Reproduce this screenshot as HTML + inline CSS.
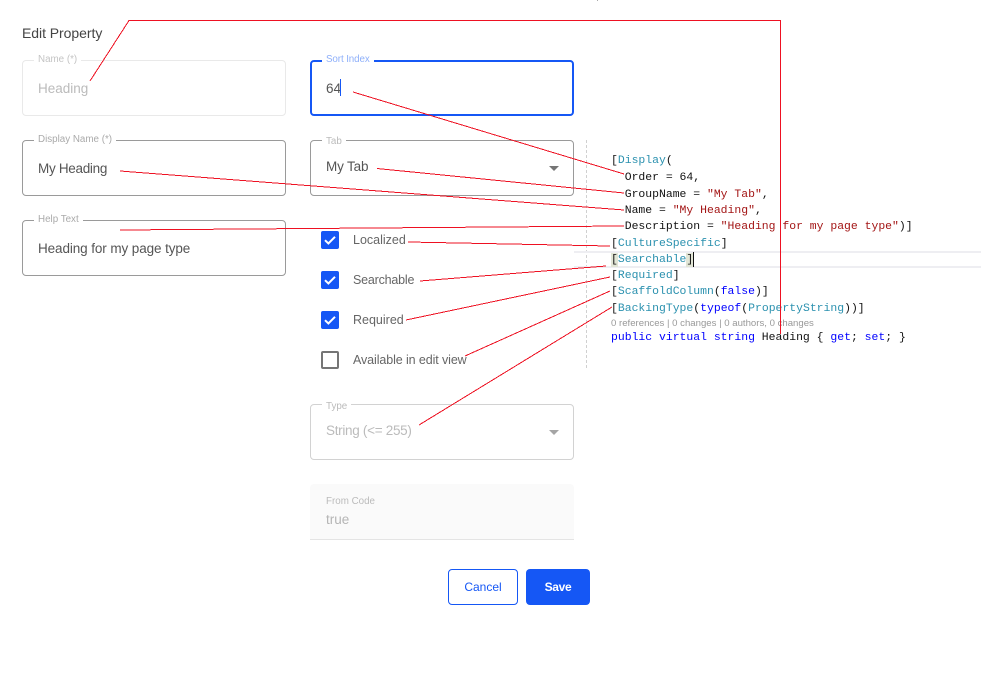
<!DOCTYPE html>
<html><head><meta charset="utf-8">
<style>
html,body{margin:0;padding:0;background:#fff;width:993px;height:686px;overflow:hidden}
body{position:relative;font-family:"Liberation Sans",sans-serif;color:#555}
.a{position:absolute;white-space:nowrap}
.box{position:absolute;box-sizing:border-box;border:1px solid #9a9a9a;border-radius:4px;width:264px;height:56px}
.lab{position:absolute;background:#fff;font-size:9.8px;line-height:12px;padding:0 4px;color:#aaa;white-space:nowrap}
.val{position:absolute;font-size:13.5px;line-height:18px;color:#555;white-space:nowrap}
.cb{position:absolute;left:321px;width:18px;height:18px;border-radius:2px;background:#1557f5}
.cb svg{display:block}
.cl{position:absolute;left:353px;font-size:12.5px;line-height:16px;color:#666;white-space:nowrap}
.tri{position:absolute;width:0;height:0;border-left:5px solid transparent;border-right:5px solid transparent;border-top:5px solid #757575}
.code{position:absolute;left:611px;font-family:"Liberation Mono",monospace;font-size:11.43px;line-height:16px;color:#111;white-space:pre}
.t{color:#2b91af}.k{color:#0000ff}.s{color:#a31515}
</style></head><body>
<div class="a" style="left:22px;top:23px;font-size:14px;line-height:20px;letter-spacing:-0.05px;color:#444">Edit Property</div>

<div class="box" style="left:22px;top:60px;border-color:#e9e9e9"></div>
<div class="lab" style="left:34px;top:54px;color:#c4c4c4">Name (*)</div>
<div class="val" style="left:38px;top:80px;color:#bbb">Heading</div>

<div class="box" style="left:22px;top:140px"></div>
<div class="lab" style="left:34px;top:134px">Display Name (*)</div>
<div class="val" style="left:38px;top:160px;letter-spacing:-0.3px">My Heading</div>

<div class="box" style="left:22px;top:220px"></div>
<div class="lab" style="left:34px;top:214px">Help Text</div>
<div class="val" style="left:38px;top:240px;letter-spacing:-0.1px">Heading for my page type</div>

<div class="box" style="left:310px;top:60px;border:2px solid #1557f5"></div>
<div class="lab" style="left:322px;top:54px;color:#8fb0fa;letter-spacing:-0.1px">Sort Index</div>
<div class="val" style="left:326px;top:80px">64</div>
<div class="a" style="left:340px;top:79px;width:1px;height:17px;background:#1557f5"></div>

<div class="box" style="left:310px;top:140px"></div>
<div class="lab" style="left:322px;top:136px;color:#bbb">Tab</div>
<div class="val" style="left:326px;top:158px;letter-spacing:-0.15px">My Tab</div>
<div class="tri" style="left:549px;top:166px"></div>

<div class="cb" style="top:231px"><svg width="18" height="18" viewBox="0 0 18 18"><path d="M4 9.2 7.4 12.5 14 5.8" fill="none" stroke="#fff" stroke-width="2"/></svg></div>
<div class="cl" style="top:232px">Localized</div>
<div class="cb" style="top:271px"><svg width="18" height="18" viewBox="0 0 18 18"><path d="M4 9.2 7.4 12.5 14 5.8" fill="none" stroke="#fff" stroke-width="2"/></svg></div>
<div class="cl" style="top:272px;letter-spacing:-0.2px">Searchable</div>
<div class="cb" style="top:311px"><svg width="18" height="18" viewBox="0 0 18 18"><path d="M4 9.2 7.4 12.5 14 5.8" fill="none" stroke="#fff" stroke-width="2"/></svg></div>
<div class="cl" style="top:312px">Required</div>
<div class="cb" style="top:351px;background:#fff;box-sizing:border-box;border:2px solid #757575"></div>
<div class="cl" style="top:352px;letter-spacing:-0.1px">Available in edit view</div>

<div class="box" style="left:310px;top:404px;border-color:#d2d2d2"></div>
<div class="lab" style="left:322px;top:401px;color:#bbb">Type</div>
<div class="val" style="left:326px;top:422px;color:#bbb;letter-spacing:-0.3px">String (&lt;= 255)</div>
<div class="tri" style="left:549px;top:430px;border-top-color:#a5a5a5"></div>

<div class="a" style="left:310px;top:484px;width:264px;height:56px;box-sizing:border-box;background:#fafafa;border-bottom:1px solid #e4e4e4;border-radius:4px 4px 0 0"></div>
<div class="a" style="left:326px;top:496px;font-size:9.8px;line-height:12px;color:#bbb">From Code</div>
<div class="a" style="left:326px;top:511px;font-size:13.5px;line-height:18px;color:#b5b5b5">true</div>

<div class="a" style="left:448px;top:569px;width:70px;height:36px;box-sizing:border-box;border:1px solid #1557f5;border-radius:4px;text-align:center;font-size:12px;line-height:34px;color:#1557f5">Cancel</div>
<div class="a" style="left:526px;top:569px;width:64px;height:36px;background:#1557f5;border-radius:4px;text-align:center;font-size:12px;line-height:36px;color:#fff;font-weight:bold;letter-spacing:-0.3px">Save</div>

<div class="a" style="left:586px;top:140px;width:0;height:228px;border-left:1px dashed #d0d0d0"></div>
<div class="a" style="left:574px;top:251px;width:407px;height:17px;box-sizing:border-box;border-top:2px solid #eeeef2;border-bottom:2px solid #eeeef2"></div>
<div class="a" style="left:611px;top:253px;width:7px;height:14px;background:#e2e6d6"></div>
<div class="a" style="left:686px;top:253px;width:7px;height:14px;background:#e2e6d6"></div>
<div class="a" style="left:693px;top:252px;width:1px;height:15px;background:#111"></div>

<div class="code" style="top:153px">[<span class="t">Display</span>(</div>
<div class="code" style="top:170px">  Order = 64,</div>
<div class="code" style="top:187px">  GroupName = <span class="s">"My Tab"</span>,</div>
<div class="code" style="top:203px">  Name = <span class="s">"My Heading"</span>,</div>
<div class="code" style="top:219px">  Description = <span class="s">"Heading for my page type"</span>)]</div>
<div class="code" style="top:236px">[<span class="t">CultureSpecific</span>]</div>
<div class="code" style="top:252px">[<span class="t">Searchable</span>]</div>
<div class="code" style="top:268px">[<span class="t">Required</span>]</div>
<div class="code" style="top:284px">[<span class="t">ScaffoldColumn</span>(<span class="k">false</span>)]</div>
<div class="code" style="top:301px">[<span class="t">BackingType</span>(<span class="k">typeof</span>(<span class="t">PropertyString</span>))]</div>
<div class="a" style="left:611px;top:317px;font-size:9.6px;line-height:13px;color:#999">0 references | 0 changes | 0 authors, 0 changes</div>
<div class="code" style="top:330px"><span class="k">public virtual string</span> Heading { <span class="k">get</span>; <span class="k">set</span>; }</div>

<svg class="a" style="left:0;top:0" width="993" height="686" viewBox="0 0 993 686" fill="none" stroke="#ee1122" stroke-width="1" shape-rendering="crispEdges">
<path d="M90 81 129 20.5H780.5V334"/>
<path d="M353 92 624 174"/>
<path d="M377 168.5 624 193"/>
<path d="M120 171 624 210"/>
<path d="M120 230 624 226"/>
<path d="M408 242 610 246"/>
<path d="M420 281 606 266"/>
<path d="M406 320 610 277"/>
<path d="M465 356 610 291"/>
<path d="M419 425 612 307"/>
</svg>
<div class="a" style="left:597px;top:0;width:1px;height:1px;background:#aaa"></div>
</body></html>
